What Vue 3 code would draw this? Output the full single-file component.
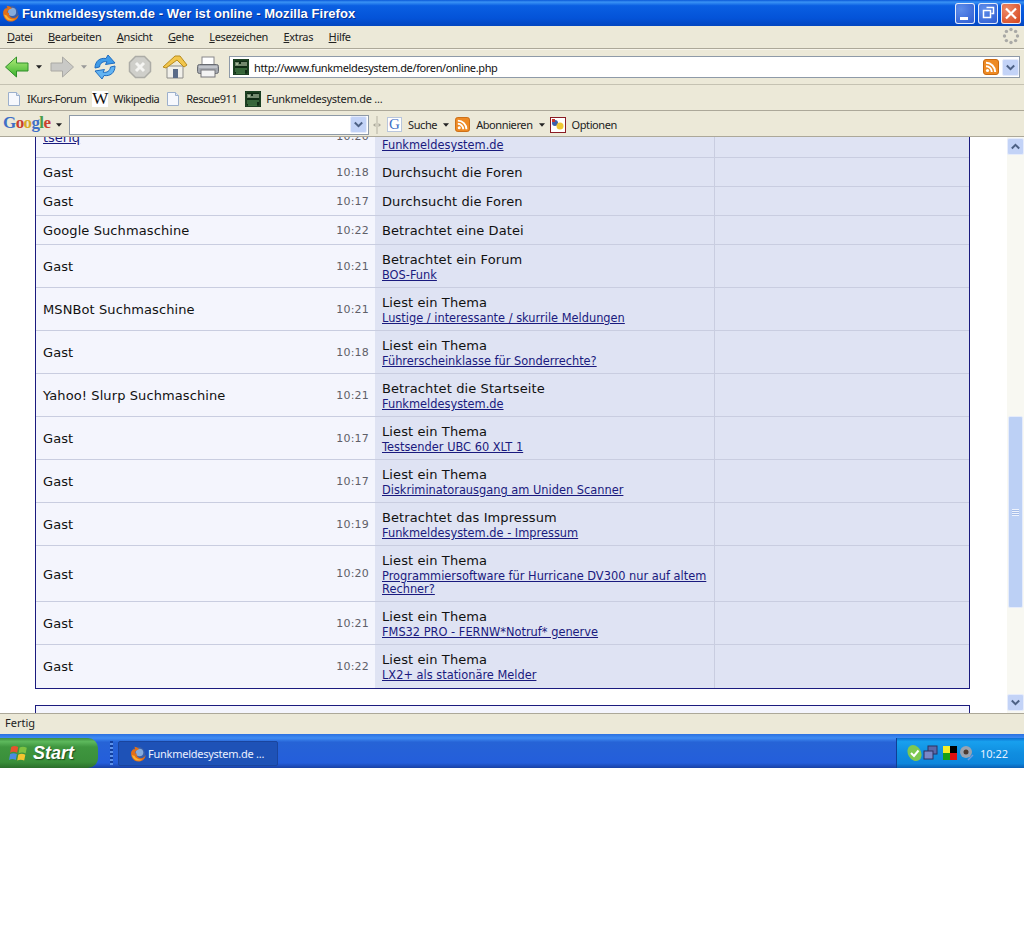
<template>
  <div class="window">
    <svg class="defs" width="0" height="0">
      <symbol id="fox" viewBox="0 0 16 16">
        <circle cx="8" cy="8" r="7.2" fill="#3a5fa8" />
        <circle cx="9.500" cy="6.500" r="3.800" fill="#86acdc" />
        <path d="M1.200 6C.6 10 3 15.600 8.400 15.600c4 0 7-3 7.300-6.900-.9 2.300-3 3.800-5.400 3.500C7.600 11.800 6 9.600 6.800 7.300 5.500 8 4.900 7 5.300 5.900 5.900 4.400 7.400 3.500 9.400 3.200 7.800 1.800 6.300 1 4.200.8 5 1.800 5.200 2.500 5 3.200 3.800 3 2.500 3.300 1.200 6z" fill="#e26f17" />
        <path d="M2 9c.6 3 3 5.600 6.400 5.600 1.500 0 2.800-.4 3.900-1.200-3 .6-6.500-.6-7.800-3.600C3.800 9.900 2.900 9.500 2 9z" fill="#f9b233" />
      </symbol>
      <symbol id="page" viewBox="0 0 16 16">
        <path d="M2.500 1.500h8l3 3v10h-11z" fill="#f6f8fd" stroke="#9cb0cc" />
        <path d="M10.500 1.500v3h3" fill="#dce6f5" stroke="#9cb0cc" />
      </symbol>
      <symbol id="favicon" viewBox="0 0 16 16">
        <rect width="16" height="16" fill="#10301a" />
        <rect x="1" y="1" width="14" height="14" fill="#0f2a14" stroke="#3a6a3a" stroke-width=".6" />
        <path d="M3 3v4M3 5h2M5 3v4M7 5v2M9 3v4M11 3v4M13 3v4" stroke="#d8e8c8" stroke-width="1" />
        <path d="M2 10h12M2 12h10M3 14h9" stroke="#5fa05f" stroke-width="1" />
      </symbol>
      <symbol id="rss" viewBox="0 0 16 16">
        <rect x=".5" y=".5" width="15" height="15" rx="2.500" fill="#ee8a24" stroke="#c96a10" />
        <circle cx="4.500" cy="11.500" r="1.600" fill="#fff" />
        <path d="M3 7.200a5.800 5.800 0 0 1 5.800 5.800M3 3.800A9.200 9.200 0 0 1 12.200 13" fill="none" stroke="#fff" stroke-width="2" />
      </symbol>
      <symbol id="chev-down" viewBox="0 0 17 17">
        <rect x=".5" y=".5" width="16" height="16" rx="1.500" fill="#c3d3f7" stroke="#e6ecfb" />
        <path d="M4.800 6.500l3.700 3.600 3.700-3.600" fill="none" stroke="#4d6185" stroke-width="2" />
      </symbol>
    </svg>

    <header class="titlebar">
      <svg class="title-icon" width="17" height="17"><use href="#fox" /></svg>
      <span class="title-text">Funkmeldesystem.de - Wer ist online - Mozilla Firefox</span>
      <div class="win-btns">
        <span class="win-btn">
          <svg width="20" height="21" viewBox="0 0 20 21"><rect x="5" y="14" width="8" height="3" fill="#fff" /></svg>
        </span>
        <span class="win-btn">
          <svg width="20" height="21" viewBox="0 0 20 21"><path d="M8.500 4.500h7v6h-2M5.500 7.500h7v7h-7z" fill="none" stroke="#fff" stroke-width="1.500" /></svg>
        </span>
        <span class="win-btn close">
          <svg width="20" height="21" viewBox="0 0 20 21"><path d="M5 5.500l10 10M15 5.500l-10 10" stroke="#fff" stroke-width="2.200" /></svg>
        </span>
      </div>
    </header>

    <nav class="menubar bar">
      <span v-for="m in menus" :key="m.rest" class="menu-item"><u>{{ m.key }}</u>{{ m.rest }}</span>
      <svg class="throbber" width="18" height="18" viewBox="0 0 18 18">
        <circle v-for="d in throbberDots" :key="d[0] + '-' + d[1]" :cx="d[0]" :cy="d[1]" r="1.700" fill="#a9a9a6" />
      </svg>
    </nav>

    <div class="navbar bar">
      <svg width="26" height="26" viewBox="0 0 26 26" class="nav-back">
        <defs>
          <linearGradient id="green" x1="0" y1="0" x2="0" y2="1"><stop offset="0" stop-color="#b4ee7c" /><stop offset="1" stop-color="#38b02c" /></linearGradient>
        </defs>
        <path d="M1.500 13L12.500 3v6h11.500v8H12.500v6z" fill="url(#green)" stroke="#2f8f2a" />
      </svg>
      <svg width="6" height="4" viewBox="0 0 7 4" class="drop"><path d="M0 0h7L3.500 4z" fill="#222" /></svg>
      <svg width="26" height="26" viewBox="0 0 26 26" class="nav-fwd">
        <path d="M24.500 13L13.500 3v6H2v8h11.500v6z" fill="#c9c9c6" stroke="#aaa9a4" />
      </svg>
      <svg width="6" height="4" viewBox="0 0 7 4" class="drop"><path d="M0 0h7L3.500 4z" fill="#999" /></svg>
      <svg width="24" height="26" viewBox="0 0 24 26" class="nav-reload">
        <path d="M2 14C2 7 7 3.500 13 4.500L15 1l7 8-9.500 1.500 1.500-2.700C10 7 7 9 6.500 13z" fill="#3f9be8" stroke="#1f6cc0" />
        <path d="M22 12c0 7-5 10.500-11 9.500L9 25l-7-8 9.500-1.500L10 18.200c4 .8 7-1.200 7.500-5.200z" fill="#63b4f2" stroke="#1f6cc0" />
      </svg>
      <svg width="24" height="24" viewBox="0 0 24 24" class="nav-stop">
        <path d="M7.500 1.500h9l6 6v9l-6 6h-9l-6-6v-9z" fill="#cfcfca" stroke="#acaca6" stroke-width="1.500" />
        <path d="M8 8l8 8M16 8l-8 8" stroke="#f5f5f2" stroke-width="3" />
      </svg>
      <svg width="26" height="26" viewBox="0 0 26 26" class="nav-home">
        <path d="M5 12v12h16V12z" fill="#f1f0ea" stroke="#8d8d8a" />
        <path d="M1 13L13 2h5l7 9-3 2-7-7-11 8z" fill="#f2c64c" stroke="#b88b1d" />
        <rect x="11" y="15" width="5" height="9" fill="#5b6c88" />
      </svg>
      <svg width="24" height="24" viewBox="0 0 24 24" class="nav-print">
        <rect x="6" y="2" width="12" height="8" fill="#fff" stroke="#87878a" />
        <rect x="1.500" y="9.500" width="21" height="9" rx="2" fill="#a5a9b0" stroke="#696c72" />
        <rect x="5" y="15" width="14" height="7" fill="#f3f3f3" stroke="#77777a" />
        <path d="M3 12h18" stroke="#dfe1e6" />
      </svg>
      <div class="urlbar">
        <svg width="16" height="16" class="url-fav"><use href="#favicon" /></svg>
        <span class="url-text">http://www.funkmeldesystem.de/foren/online.php</span>
        <svg width="16" height="16" class="url-rss"><use href="#rss" /></svg>
        <svg width="17" height="17"><use href="#chev-down" /></svg>
      </div>
    </div>

    <div class="bookmarks bar">
      <span v-for="b in bookmarks" :key="b.label" class="bookmark">
        <svg v-if="b.icon !== 'wiki'" width="16" height="16"><use :href="'#' + b.icon" /></svg>
        <span v-else class="wiki">W</span>
        <span>{{ b.label }}</span>
      </span>
    </div>

    <div class="googlebar bar">
      <span class="google-logo"><i class="c-b">G</i><i class="c-r">o</i><i class="c-y">o</i><i class="c-b">g</i><i class="c-g">l</i><i class="c-r">e</i></span>
      <svg width="6" height="4" viewBox="0 0 7 4" class="drop g-drop"><path d="M0 0h7L3.500 4z" fill="#222" /></svg>
      <div class="g-input"><svg width="17" height="17"><use href="#chev-down" /></svg></div>
      <svg class="g-grip" width="10" height="20" viewBox="0 0 10 20">
        <path d="M5 1v18" stroke="#b5b2a3" />
        <path d="M3.500 8v4L1 10zM6.500 8v4L9 10z" fill="#a9a79a" />
      </svg>
      <span class="g-g">G</span>
      <span class="g-label">Suche</span>
      <svg width="6" height="4" viewBox="0 0 7 4" class="drop g-drop2"><path d="M0 0h7L3.500 4z" fill="#222" /></svg>
      <svg width="15" height="15" class="g-rss"><use href="#rss" /></svg>
      <span class="g-label">Abonnieren</span>
      <svg width="6" height="4" viewBox="0 0 7 4" class="drop g-drop2"><path d="M0 0h7L3.500 4z" fill="#222" /></svg>
      <svg width="16" height="16" viewBox="0 0 16 16" class="g-opt">
        <rect x=".5" y=".5" width="15" height="15" fill="#fff" stroke="#8a1c24" />
        <circle cx="5" cy="6" r="3" fill="#3d5fa8" />
        <circle cx="10" cy="9" r="3.500" fill="#efc732" />
        <rect x="2" y="2" width="3" height="3" fill="#c8352c" />
      </svg>
      <span class="g-label">Optionen</span>
    </div>

    <main class="content">
      <div class="page">
        <div class="forum-table">
          <div v-for="(row, i) in rows" :key="i" class="row">
            <div class="cell who">
              <a v-if="row.member" class="link member">{{ row.name }}</a>
              <span v-else class="name">{{ row.name }}</span>
              <span class="time">{{ row.time }}</span>
            </div>
            <div class="cell where">
              <div class="action">{{ row.action }}</div>
              <a v-if="row.link" class="link">{{ row.link }}</a>
            </div>
            <div class="cell blank"></div>
          </div>
        </div>
        <div class="next-box"></div>
      </div>
      <aside class="scrollbar">
        <svg width="17" height="17" viewBox="0 0 17 17">
          <rect x=".5" y=".5" width="16" height="16" rx="1.500" fill="#c3d3f7" stroke="#e6ecfb" />
          <path d="M4.800 10.500l3.700-3.600 3.700 3.600" fill="none" stroke="#4d6185" stroke-width="2" />
        </svg>
        <div class="thumb"><span class="grip"></span></div>
        <svg class="sb-down" width="17" height="17"><use href="#chev-down" /></svg>
      </aside>
    </main>

    <footer class="statusbar">Fertig</footer>

    <div class="taskbar">
      <div class="start">
        <svg width="20" height="20" viewBox="0 0 18 18">
          <path d="M2 3.500c2-1 4-1 6.300 0l-1 5.200c-2.300-1-4.300-1-6.300 0z" fill="#e5532d" />
          <path d="M9.500 4c2-1 4.300-1 6.500.2l-1 5.200c-2.200-1-4.300-1-6.400 0z" fill="#7fc241" />
          <path d="M1 10c2-1 4-1 6.100 0l-1 5.200c-2.200-1-4-1-6.100 0z" fill="#4a8be0" />
          <path d="M8.300 10.500c2-1 4.300-1 6.400.1l-1 5.200c-2.200-1-4.300-1-6.300 0z" fill="#f5c52f" />
        </svg>
        <span>Start</span>
      </div>
      <span class="grips"></span>
      <div class="task-btn">
        <svg width="16" height="16"><use href="#fox" /></svg>
        <span>Funkmeldesystem.de ...</span>
      </div>
      <div class="tray">
        <svg width="17" height="18" viewBox="0 0 17 18"><ellipse cx="8.500" cy="9" rx="6.500" ry="8.500" transform="rotate(-30 8.500 9)" fill="#7ec850" /><path d="M5 9l3 3 4.500-5.500" fill="none" stroke="#fff" stroke-width="2" /></svg>
        <svg width="15" height="16" viewBox="0 0 15 16"><rect x="5" y="1" width="9" height="8" fill="#5a68a8" stroke="#2c3160" /><rect x="1" y="6" width="9" height="8" fill="#7a88c8" stroke="#2c3160" /></svg>
        <svg class="tray-flag" width="14" height="14" viewBox="0 0 14 14"><rect width="7" height="7" fill="#f3ee2a" /><rect x="7" width="7" height="7" fill="#000" /><rect y="7" width="7" height="7" fill="#16a016" /><rect x="7" y="7" width="7" height="7" fill="#e01010" /></svg>
        <svg class="tray-spk" width="16" height="16" viewBox="0 0 16 16"><circle cx="7" cy="7" r="6" fill="#9aa3b0" /><circle cx="7" cy="7" r="2.500" fill="#4c3a30" /><path d="M9 15l5-5" stroke="#6f9ae0" stroke-width="1.500" /></svg>
        <span class="clock">10:22</span>
      </div>
    </div>
  </div>
</template>

<script setup>
const menus = [
  { key: 'D', rest: 'atei' },
  { key: 'B', rest: 'earbeiten' },
  { key: 'A', rest: 'nsicht' },
  { key: 'G', rest: 'ehe' },
  { key: 'L', rest: 'esezeichen' },
  { key: 'E', rest: 'xtras' },
  { key: 'H', rest: 'ilfe' }
]

const throbberDots = [
  [9, 2.5], [13.6, 4.4], [15.5, 9], [13.6, 13.6],
  [9, 15.5], [4.4, 13.6], [2.5, 9], [4.4, 4.4]
]

const bookmarks = [
  { label: 'IKurs-Forum', icon: 'page' },
  { label: 'Wikipedia', icon: 'wiki' },
  { label: 'Rescue911', icon: 'page' },
  { label: 'Funkmeldesystem.de ...', icon: 'favicon' }
]

const rows = [
  { name: 'tseriq', member: true, time: '10:20', action: 'Betrachtet die Startseite', link: 'Funkmeldesystem.de' },
  { name: 'Gast', time: '10:18', action: 'Durchsucht die Foren' },
  { name: 'Gast', time: '10:17', action: 'Durchsucht die Foren' },
  { name: 'Google Suchmaschine', time: '10:22', action: 'Betrachtet eine Datei' },
  { name: 'Gast', time: '10:21', action: 'Betrachtet ein Forum', link: 'BOS-Funk' },
  { name: 'MSNBot Suchmaschine', time: '10:21', action: 'Liest ein Thema', link: 'Lustige / interessante / skurrile Meldungen' },
  { name: 'Gast', time: '10:18', action: 'Liest ein Thema', link: 'Führerscheinklasse für Sonderrechte?' },
  { name: 'Yahoo! Slurp Suchmaschine', time: '10:21', action: 'Betrachtet die Startseite', link: 'Funkmeldesystem.de' },
  { name: 'Gast', time: '10:17', action: 'Liest ein Thema', link: 'Testsender UBC 60 XLT 1' },
  { name: 'Gast', time: '10:17', action: 'Liest ein Thema', link: 'Diskriminatorausgang am Uniden Scanner' },
  { name: 'Gast', time: '10:19', action: 'Betrachtet das Impressum', link: 'Funkmeldesystem.de - Impressum' },
  { name: 'Gast', time: '10:20', action: 'Liest ein Thema', link: 'Programmiersoftware für Hurricane DV300 nur auf altem Rechner?' },
  { name: 'Gast', time: '10:21', action: 'Liest ein Thema', link: 'FMS32 PRO - FERNW*Notruf* generve' },
  { name: 'Gast', time: '10:22', action: 'Liest ein Thema', link: 'LX2+ als stationäre Melder' }
]
</script>

<style>
html, body {
  margin: 0;
  background: #fff;
}
</style>

<style scoped>
.window {
  width: 1024px;
  height: 768px;
  display: flex;
  flex-direction: column;
  overflow: hidden;
  font-family: "Noto Sans", "Open Sans", sans-serif;
  font-size: 11px;
  color: #000;
}

.defs {
  position: absolute;
}

svg {
  display: block;
  flex-shrink: 0;
}

.titlebar {
  height: 26px;
  display: flex;
  align-items: center;
  padding-left: 2px;
  background: linear-gradient(#0a58d8 0%, #3a93f5 8%, #0a5fe2 22%, #0453d8 70%, #0246c0 100%);
  color: #fff;
}

.title-icon {
  margin-right: 3px;
}

.title-text {
  font-family: "Liberation Sans", sans-serif;
  font-weight: 700;
  font-size: 13px;
  letter-spacing: 0.05px;
  text-shadow: 1px 1px 0 #0a2f8c;
}

.win-btns {
  margin-left: auto;
  margin-right: 3px;
  display: flex;
  gap: 3px;
}

.win-btn {
  width: 20px;
  height: 21px;
  border-radius: 3px;
  box-sizing: border-box;
  background: radial-gradient(circle at 30% 30%, #5f8eea, #2a58d0);
  box-shadow: inset 0 0 0 1px #e4ecfb;
}

.win-btn.close {
  background: radial-gradient(circle at 30% 30%, #ee8a68, #d23f16);
}

.bar {
  display: flex;
  align-items: center;
  background: #ece9d8;
  box-sizing: border-box;
}

.menubar {
  height: 23px;
  padding-left: 7px;
  padding-bottom: 2px;
  gap: 15.500px;
  border-bottom: 1px solid #aca899;
  font-size: 11px;
  letter-spacing: -0.35px;
  color: #222;
}

.menu-item u {
  text-underline-offset: 1px;
}

.throbber {
  margin-left: auto;
  margin-right: 4px;
}

.navbar {
  height: 36px;
  padding-left: 4px;
  border-bottom: 1px solid #c5c2b2;
  border-top: 1px solid #f6f4ea;
}

.drop {
  margin-left: 6px;
}

.nav-fwd {
  margin-left: 7px;
}

.nav-reload {
  margin-left: 6px;
}

.nav-stop {
  margin-left: 11px;
}

.nav-home {
  margin-left: 10px;
}

.nav-print {
  margin-left: 8px;
}

.urlbar {
  margin-left: 9px;
  width: 791px;
  height: 22px;
  box-sizing: border-box;
  background: #fff;
  border: 1px solid #8e9aa8;
  display: flex;
  align-items: center;
  padding-left: 3px;
}

.url-fav {
  margin-right: 5px;
}

.url-text {
  font-size: 11px;
  letter-spacing: -0.37px;
  flex: 1;
  color: #111;
}

.url-rss {
  margin-right: 3px;
}

.bookmarks {
  height: 26px;
  padding-left: 6px;
  padding-top: 2px;
  gap: 6px;
  border-bottom: 1px solid #aca899;
  letter-spacing: -0.5px;
  color: #222;
}

.bookmark {
  display: flex;
  align-items: center;
  gap: 5px;
}

.bookmark:last-child {
  margin-left: 2px;
  letter-spacing: -0.25px;
}

.wiki {
  width: 16px;
  height: 16px;
  background: #fff;
  font-family: "Liberation Serif", serif;
  font-size: 17px;
  letter-spacing: 0;
  line-height: 16px;
  text-align: center;
  color: #111;
}

.googlebar {
  height: 26px;
  padding-left: 3px;
  padding-top: 2px;
  border-bottom: 1px solid #aca899;
  letter-spacing: -0.4px;
  color: #222;
}

.google-logo {
  font-family: "Liberation Serif", serif;
  font-weight: 700;
  font-size: 17px;
  letter-spacing: -0.6px;
  width: 48px;
  margin-top: -3px;
}

.google-logo i {
  font-style: normal;
}

.c-b { color: #3f6fc6; }
.c-r { color: #c9402f; }
.c-y { color: #d8a92a; }
.c-g { color: #4a9c4a; }

.g-drop {
  margin-left: 5px;
}

.g-input {
  margin-left: 7px;
  width: 300px;
  height: 20px;
  box-sizing: border-box;
  background: #fff;
  border: 1px solid #8e9aa8;
  display: flex;
  justify-content: flex-end;
  align-items: center;
  padding-right: 1px;
}

.g-grip {
  margin-left: 3px;
}

.g-g {
  margin-left: 5px;
  width: 15px;
  height: 15px;
  box-sizing: border-box;
  border: 1px solid #b9c6dc;
  background: #fff;
  color: #3f6fc6;
  font-family: "Liberation Serif", serif;
  font-size: 15px;
  letter-spacing: 0;
  line-height: 13px;
  text-align: center;
}

.g-label {
  margin-left: 6px;
}

.g-drop2 {
  margin-left: 6px;
}

.g-rss {
  margin-left: 6px;
}

.g-opt {
  margin-left: 5px;
}

.content {
  height: 576px;
  display: flex;
  overflow: hidden;
  background: #fff;
}

.page {
  width: 1007px;
  padding-left: 35px;
  box-sizing: border-box;
  overflow: hidden;
  font-family: "DejaVu Sans", sans-serif;
}

.forum-table {
  width: 935px;
  margin-top: -22px;
  box-sizing: border-box;
  border: 1px solid #1b1b7e;
  border-top: none;
}

.row {
  display: grid;
  grid-template-columns: 339px 340px 1fr;
  border-bottom: 1px solid #c9cde0;
}

.row:last-child {
  border-bottom: none;
}

.row:last-child .cell {
  padding-bottom: 6px;
}

.cell {
  padding: 7px 6px 5px;
  min-width: 0;
}

.who {
  background: #f4f5fd;
  display: flex;
  align-items: center;
  justify-content: space-between;
  padding-left: 7px;
}

.where {
  background: #dfe3f3;
  border-right: 1px solid #c9cde0;
  padding-left: 7px;
}

.blank {
  background: #dfe3f3;
}

.name,
.action {
  font-size: 13px;
  letter-spacing: 0.1px;
  line-height: 16px;
  color: #111;
}

.time {
  font-size: 11px;
  letter-spacing: 0.2px;
  color: #5f5f68;
  position: relative;
  top: -1px;
}

.link {
  display: block;
  margin-top: 1px;
  font-size: 11.400px;
  line-height: 13px;
  color: #1a1a7e;
  text-decoration: underline;
}

.member {
  font-size: 13px;
  line-height: 16px;
}

.next-box {
  width: 935px;
  height: 60px;
  margin-top: 16px;
  box-sizing: border-box;
  border: 1px solid #1b1b7e;
  background: #f4f5fd;
}

.scrollbar {
  width: 17px;
  background: #f8f8f2;
  display: flex;
  flex-direction: column;
  padding-top: 1px;
  box-sizing: border-box;
}

.thumb {
  margin: 261px 1px 0;
  height: 192px;
  box-sizing: border-box;
  background: #bcd0f5;
  border: 1px solid #e6ecfb;
  border-radius: 2px;
  display: flex;
  align-items: center;
  justify-content: center;
}

.grip {
  width: 7px;
  height: 7px;
  background: repeating-linear-gradient(#eef3fd 0 1px, #a4bbe8 1px 2px);
}

.sb-down {
  margin-top: 86px;
}

.statusbar {
  height: 21px;
  box-sizing: border-box;
  padding: 1px 5px;
  background: #ece9d8;
  border-top: 1px solid #aca899;
  color: #222;
  line-height: 16px;
}

.taskbar {
  flex: 1;
  display: flex;
  align-items: flex-end;
  background: linear-gradient(#2a70e0 0%, #3f8cf3 12%, #2663d6 24%, #245edb 85%, #1941a5 100%);
  color: #fff;
}

.start {
  width: 98px;
  height: 30px;
  box-sizing: border-box;
  padding-left: 9px;
  display: flex;
  align-items: center;
  gap: 4px;
  border-radius: 0 10px 10px 0;
  background: linear-gradient(#3f8f3f 0%, #5db85c 12%, #3f963f 30%, #3a8f3a 80%, #2b6e2b 100%);
  font-family: "Liberation Sans", sans-serif;
  font-style: italic;
  font-weight: 700;
  font-size: 18px;
  text-shadow: 1px 1px 1px #1c4a1c;
}

.grips {
  width: 3px;
  height: 24px;
  margin-left: 12px;
  margin-bottom: 3px;
  background: repeating-linear-gradient(#123f9e 0 2px, #5d92ea 2px 4px);
}

.task-btn {
  margin-left: 5px;
  margin-bottom: 2px;
  width: 160px;
  height: 25px;
  box-sizing: border-box;
  padding-left: 11px;
  display: flex;
  align-items: center;
  gap: 2px;
  background: #1e52b7;
  border: 1px solid #1a459e;
  border-radius: 2px;
  letter-spacing: -0.25px;
  color: #eaf0ff;
}

.tray {
  margin-left: auto;
  width: 128px;
  height: 30px;
  box-sizing: border-box;
  padding-left: 9px;
  display: flex;
  align-items: center;
  background: linear-gradient(#0c6fd0 0%, #18a0ee 12%, #108ee0 50%, #0d86dc 85%, #0a5fb4 100%);
  border-left: 1px solid #0f3f94;
}

.tray-flag {
  margin-left: 5px;
}

.tray-spk {
  margin-left: 2px;
}

.clock {
  margin-left: 5px;
  color: #e6f0ff;
}
</style>
